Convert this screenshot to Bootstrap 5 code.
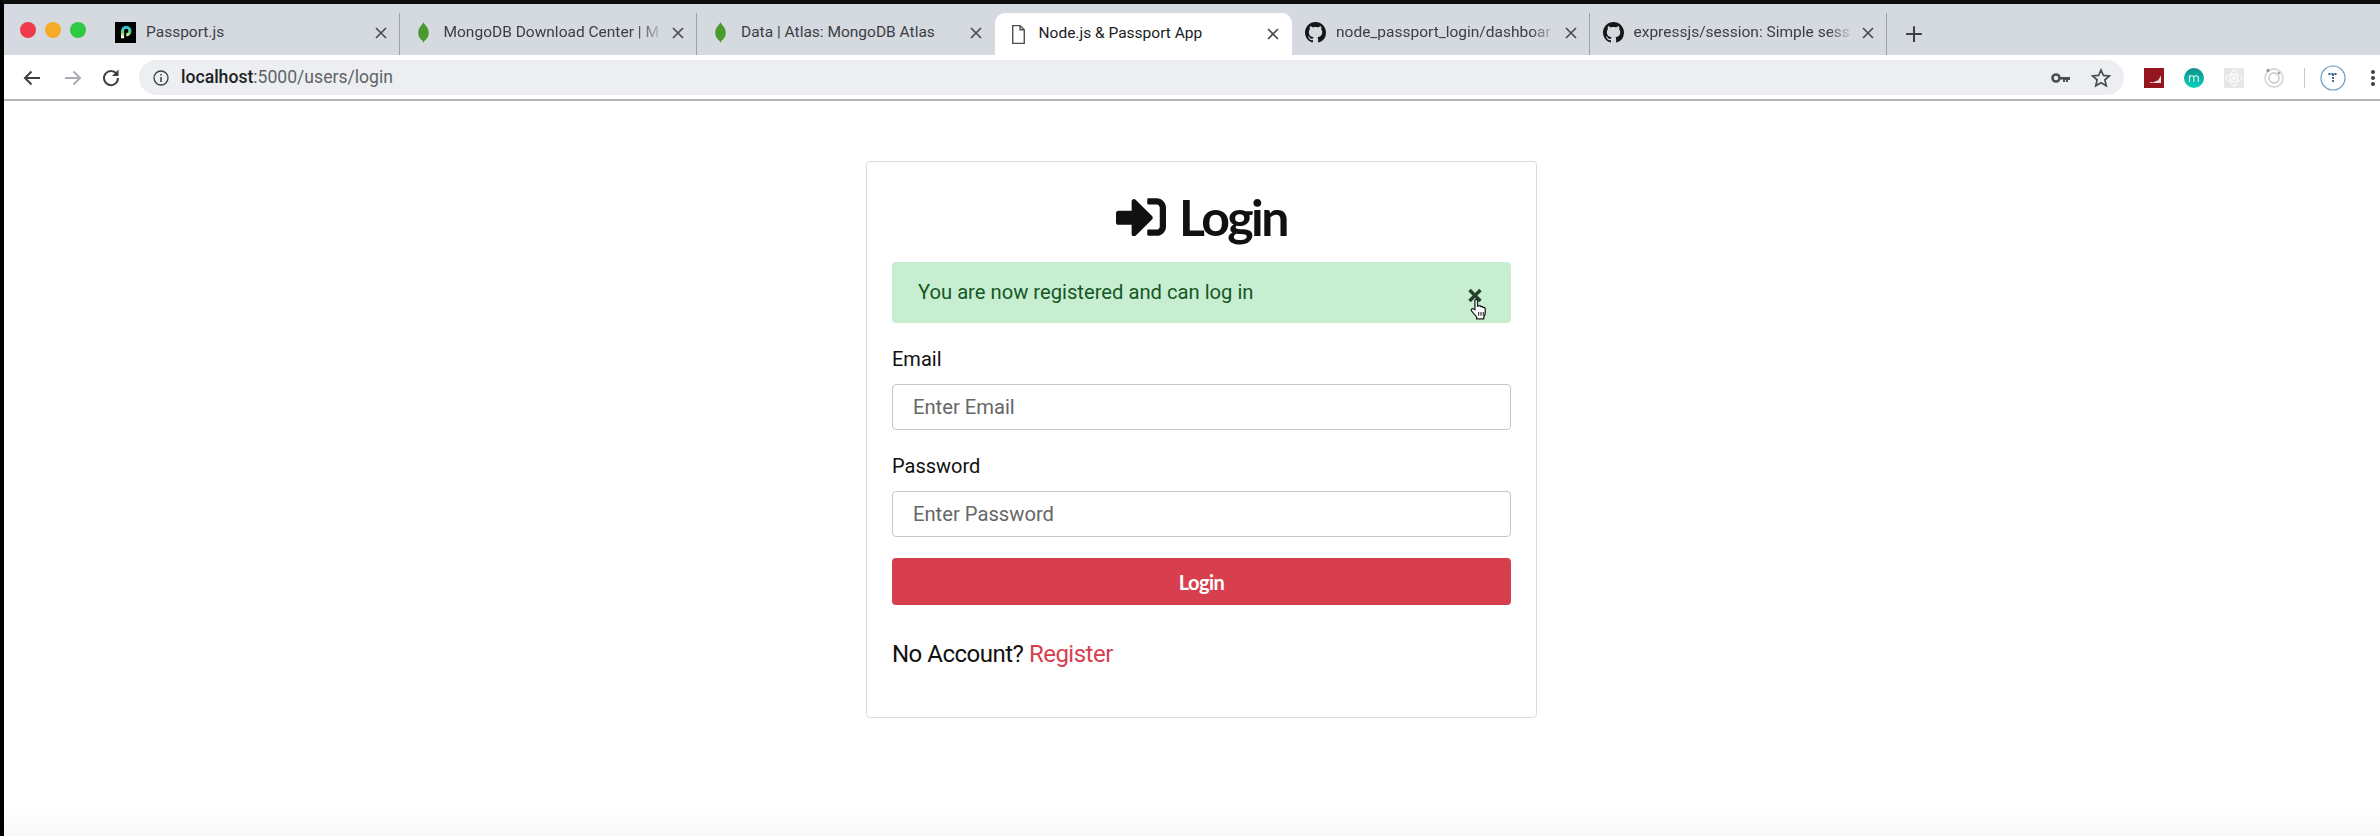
<!DOCTYPE html>
<html lang="en">
<head>
    <meta charset="UTF-8">
    <meta name="viewport" content="width=device-width, initial-scale=1.0">
    <title>Node.js &amp; Passport App</title>
    <link href="https://cdn.jsdelivr.net/npm/bootstrap@5.3.0/dist/css/bootstrap.min.css" rel="stylesheet">
    <script src="https://cdn.jsdelivr.net/npm/bootstrap@5.3.0/dist/js/bootstrap.bundle.min.js"></script>
    <style>
        html, body { height: 100%; }
        body {
            font-family: "Roboto", "Liberation Sans", sans-serif;
            background: #fff;
            overflow: hidden;
        }
        .screen {
            height: 836px;
            border-top: 4px solid #0d0d0d;
            border-left: 4px solid #000;
        }

        /* browser chrome */
        .tab-strip { height: 51px; background: #d5d9e0; padding-left: 98px; }
        .lights { width: 0; }
        .light { width: 16px; height: 16px; border-radius: 50%; flex: none; }
        .light-red { background: #ee3b4c; }
        .light-yellow { background: #f5ab25; }
        .light-green { background: #2ecb42; }
        .lights-box { gap: 9px; margin-left: -82px; margin-top: 1px; padding-top: 17px; }
        .tab-item {
            width: 297.5px;
            height: 42px;
            margin-top: 9px;
            padding: 0 11px 3px 13px;
            font-size: 15.5px;
            color: #3c4043;
            border-right: 1px solid #9da1a8;
        }
        .tab-item.no-line { border-right-color: transparent; }
        .tab-item.tab-active {
            background: #fff;
            color: #202124;
            border-radius: 10px 10px 0 0;
            border-right-color: transparent;
            height: 46px;
            padding-bottom: 4px;
        }
        .tab-icon { width: 21px; height: 21px; flex: none; margin-right: 10px; }
        .tab-title { flex: 1; white-space: nowrap; overflow: hidden; }
        .tab-fade {
            -webkit-mask-image: linear-gradient(to right, #000 88%, transparent 100%);
            mask-image: linear-gradient(to right, #000 88%, transparent 100%);
        }
        .tab-close { width: 12px; height: 12px; flex: none; margin-left: 8px; margin-right: 1px; }
        .plus-btn { width: 18px; height: 18px; margin: 21px 0 0 18px; }

        .tool-bar { height: 46px; background: #fff; border-bottom: 2px solid #b4b4b6; padding-top: 1px; }
        .nav-icon { width: 20px; height: 20px; flex: none; }
        .nav-back { margin-left: 18px; }
        .nav-forward { margin-left: 21px; }
        .nav-reload { margin-left: 18px; }
        .omni {
            width: 1985px;
            height: 35px;
            margin-left: 18px;
            background: #eceef1;
            border-radius: 18px;
            font-size: 17.6px;
            color: #5f6368;
            padding: 0 13px 0 14px;
        }
        .omni b { font-weight: 500; color: #202124; }
        .ext-icon { width: 22px; height: 22px; flex: none; margin-left: 18px; }
        .ext-first { margin-left: 19px; }
        .tool-sep { width: 1px; height: 20px; background: #c8c8c8; margin-left: 19px; }
        .avatar-icon { margin-left: 15px; }
        .menu-dots { margin-left: 24px; }

        /* login page */
        .page {
            height: 735px;
            padding: 60px 0 0 862px;
            background: linear-gradient(to bottom, #fff calc(100% - 30px), #f8f8f8 100%);
        }
        .login-card {
            width: 671px;
            height: 557px;
            border: 1px solid #dcdcdc;
            border-radius: 4px;
            padding: 25px;
        }
        .login-title {
            height: 60px;
            margin: 0 0 15px;
            gap: 13px;
            font-family: "Lato", "Liberation Sans", sans-serif;
            font-weight: 700;
            font-size: 50px;
            letter-spacing: -2.5px;
            color: #111;
        }
        .login-title svg { width: 50px; height: 38px; }
        .msg-box {
            height: 61px;
            margin-bottom: 24px;
            padding: 0 29px 0 26px;
            background: #c8eed2;
            border: 0;
            border-radius: 4px;
            color: #155724;
            font-size: 20.2px;
        }
        .msg-close { position: relative; width: 14px; height: 15px; padding: 0; margin-top: 5px; border: 0; background: none; }
        .msg-close svg { display: block; }
        .msg-close .hand-cursor { position: absolute; left: 0; top: 9px; width: 23px; height: 23px; }
        .field-label { display: block; height: 24px; line-height: 24px; margin-bottom: 13px; font-size: 20px; color: #111; }
        .field-input {
            height: 46px;
            padding: 0 20px;
            margin-bottom: 24px;
            font-size: 20.2px;
            border: 1px solid #c4c7ca;
            border-radius: 4px;
        }
        .field-input::placeholder { color: #666; opacity: 1; }
        .field-input.last-input { margin-bottom: 21px; }
        .login-btn {
            height: 47px;
            background: #d83f4e;
            border: 0;
            border-radius: 4px;
            font-family: "Lato", "Liberation Sans", sans-serif;
            font-weight: 700;
            font-size: 20px;
            color: #fff;
            letter-spacing: -.5px;
        }
        .sign-up { margin: 31px 0 0; line-height: 36px; font-size: 24px; color: #111; letter-spacing: -.5px; }
        .sign-up a { color: #d83f4e; text-decoration: none; }
    </style>
</head>
<body>
<div class="screen">

    <!-- tabs -->
    <div class="tab-strip d-flex align-items-start">
        <div class="lights">
            <div class="lights-box d-flex">
                <div class="light light-red"></div>
                <div class="light light-yellow"></div>
                <div class="light light-green"></div>
            </div>
        </div>
        <div class="tab-item d-flex align-items-center">
            <svg class="tab-icon" viewBox="0 0 20 20"><defs><linearGradient id="ppt" x1="0" y1="0" x2="0" y2="1"><stop offset="0" stop-color="#2ec4e0"/><stop offset=".5" stop-color="#6ad66a"/><stop offset=".8" stop-color="#f6f3c0"/><stop offset="1" stop-color="#fff"/></linearGradient></defs><rect width="20" height="20" fill="#000"/><path d="M7.200 15.500V8.500a3.500 3.500 0 1 1 3.500 3.500" fill="none" stroke="url(#ppt)" stroke-width="3"/></svg>
            <div class="tab-title">Passport.js</div>
            <svg class="tab-close" viewBox="0 0 12 12"><path d="M1 1l10 10M11 1L1 11" stroke="#4a4d52" stroke-width="1.7"/></svg>
        </div>
        <div class="tab-item d-flex align-items-center">
            <svg class="tab-icon" viewBox="0 0 20 20"><path d="M10 0c1 3 5 5 5 10s-3 7-4.300 8L10 20l-.7-2C8 17 5 15 5 10s4-7 5-10z" fill="#4a9a2e"/></svg>
            <div class="tab-title tab-fade">MongoDB Download Center | M</div>
            <svg class="tab-close" viewBox="0 0 12 12"><path d="M1 1l10 10M11 1L1 11" stroke="#4a4d52" stroke-width="1.7"/></svg>
        </div>
        <div class="tab-item no-line d-flex align-items-center">
            <svg class="tab-icon" viewBox="0 0 20 20"><path d="M10 0c1 3 5 5 5 10s-3 7-4.300 8L10 20l-.7-2C8 17 5 15 5 10s4-7 5-10z" fill="#4a9a2e"/></svg>
            <div class="tab-title">Data | Atlas: MongoDB Atlas</div>
            <svg class="tab-close" viewBox="0 0 12 12"><path d="M1 1l10 10M11 1L1 11" stroke="#4a4d52" stroke-width="1.7"/></svg>
        </div>
        <div class="tab-item tab-active d-flex align-items-center">
            <svg class="tab-icon" viewBox="0 0 20 20"><path d="M4.500 1.500h7l4 4v13h-11zM11.500 1.500v4h4" fill="#fff" stroke="#4a4d52" stroke-width="1.300"/></svg>
            <div class="tab-title">Node.js &amp; Passport App</div>
            <svg class="tab-close" viewBox="0 0 12 12"><path d="M1 1l10 10M11 1L1 11" stroke="#4a4d52" stroke-width="1.7"/></svg>
        </div>
        <div class="tab-item d-flex align-items-center">
            <svg class="tab-icon" viewBox="0 0 16 16"><path fill="#161616" d="M8 0C3.580 0 0 3.580 0 8c0 3.540 2.290 6.530 5.470 7.590.4.070.55-.17.55-.38 0-.19-.01-.82-.01-1.490-2.010.37-2.530-.49-2.690-.94-.09-.23-.48-.94-.82-1.130-.28-.15-.68-.52-.01-.53.63-.01 1.080.58 1.230.82.72 1.210 1.870.87 2.330.66.070-.52.28-.87.51-1.070-1.780-.2-3.640-.89-3.640-3.950 0-.87.31-1.590.82-2.150-.08-.2-.36-1.020.08-2.120 0 0 .67-.21 2.200.82.64-.18 1.320-.27 2-.27.68 0 1.360.09 2 .27 1.530-1.040 2.200-.82 2.200-.82.44 1.100.16 1.920.08 2.120.51.56.82 1.270.82 2.150 0 3.070-1.870 3.750-3.650 3.950.29.25.54.73.54 1.480 0 1.070-.01 1.930-.01 2.200 0 .21.15.46.55.38A8.013 8.013 0 0 0 16 8c0-4.420-3.580-8-8-8z"/></svg>
            <div class="tab-title tab-fade">node_passport_login/dashboar</div>
            <svg class="tab-close" viewBox="0 0 12 12"><path d="M1 1l10 10M11 1L1 11" stroke="#4a4d52" stroke-width="1.7"/></svg>
        </div>
        <div class="tab-item d-flex align-items-center">
            <svg class="tab-icon" viewBox="0 0 16 16"><path fill="#161616" d="M8 0C3.580 0 0 3.580 0 8c0 3.540 2.290 6.530 5.470 7.590.4.070.55-.17.55-.38 0-.19-.01-.82-.01-1.490-2.010.37-2.530-.49-2.690-.94-.09-.23-.48-.94-.82-1.130-.28-.15-.68-.52-.01-.53.63-.01 1.080.58 1.230.82.72 1.210 1.870.87 2.330.66.070-.52.28-.87.51-1.070-1.780-.2-3.640-.89-3.640-3.950 0-.87.31-1.590.82-2.150-.08-.2-.36-1.020.08-2.120 0 0 .67-.21 2.200.82.64-.18 1.320-.27 2-.27.68 0 1.360.09 2 .27 1.530-1.040 2.200-.82 2.200-.82.44 1.100.16 1.920.08 2.120.51.56.82 1.270.82 2.150 0 3.070-1.870 3.750-3.650 3.950.29.25.54.73.54 1.480 0 1.070-.01 1.930-.01 2.200 0 .21.15.46.55.38A8.013 8.013 0 0 0 16 8c0-4.420-3.580-8-8-8z"/></svg>
            <div class="tab-title tab-fade">expressjs/session: Simple sess</div>
            <svg class="tab-close" viewBox="0 0 12 12"><path d="M1 1l10 10M11 1L1 11" stroke="#4a4d52" stroke-width="1.7"/></svg>
        </div>
        <svg class="plus-btn" viewBox="0 0 16 16"><path d="M8 1v14M1 8h14" stroke="#3c4043" stroke-width="1.800"/></svg>
    </div>

    <!-- address bar -->
    <div class="tool-bar d-flex align-items-center">
        <svg class="nav-icon nav-back" viewBox="0 0 20 20"><path d="M18 10H3M9.500 3.500L3 10l6.500 6.500" fill="none" stroke="#3c4043" stroke-width="2"/></svg>
        <svg class="nav-icon nav-forward" viewBox="0 0 20 20"><path d="M2 10h15M10.500 3.500L17 10l-6.500 6.500" fill="none" stroke="#a9acb0" stroke-width="2"/></svg>
        <svg class="nav-icon nav-reload" viewBox="0 0 20 20"><path d="M16 6.500A7 7 0 1 0 17 10" fill="none" stroke="#3c4043" stroke-width="2"/><path d="M17.500 1.500v6.500h-6.500z" fill="#3c4043"/></svg>
        <div class="omni d-flex align-items-center">
            <svg class="me-2" width="16" height="16" viewBox="0 0 16 16"><circle cx="8" cy="8" r="7" fill="none" stroke="#3c4043" stroke-width="1.300"/><path d="M8 7v5M8 4v1.600" stroke="#3c4043" stroke-width="1.500"/></svg>
            <div class="flex-grow-1 ms-1"><b>localhost</b>:5000/users/login</div>
            <svg class="me-3" width="20" height="14" viewBox="0 0 20 14"><circle cx="5" cy="7" r="3.500" fill="none" stroke="#4a4d52" stroke-width="2.600"/><path d="M9 6h10v3h-2v2h-2V9h-1v2h-2V8.500H9z" fill="#4a4d52"/></svg>
            <svg class="ms-1" width="20" height="20" viewBox="0 0 20 20"><path d="M10 2l2.400 5.400 5.900.6-4.400 3.900 1.300 5.800L10 14.700l-5.200 3 1.300-5.800L1.700 8l5.900-.6z" fill="none" stroke="#4a4d52" stroke-width="1.700"/></svg>
        </div>
        <svg class="ext-icon ext-first" viewBox="0 0 22 22"><rect x="1" y="1" width="20" height="20" fill="#95151f"/><path d="M4 16h2l2-1 2 .5 3-1.500 2-.5 3-5v7.500z" fill="#fff" opacity=".85"/></svg>
        <svg class="ext-icon" viewBox="0 0 22 22"><defs><linearGradient id="mint" x1="0" y1="0" x2="0" y2="1"><stop offset="0" stop-color="#0e8f8a"/><stop offset="1" stop-color="#08d3bd"/></linearGradient></defs><circle cx="11" cy="11" r="10" fill="url(#mint)"/><path d="M6.500 15V8.500M6.500 10q2.200-2.500 4.400 0V15M10.900 10q2.200-2.500 4.400 0V15" fill="none" stroke="#d7f5ee" stroke-width="1.200"/></svg>
        <svg class="ext-icon" viewBox="0 0 22 22"><rect x="1" y="1" width="20" height="20" fill="#e7e7e7"/><ellipse cx="11" cy="11" rx="8" ry="3.500" fill="none" stroke="#fafafa" stroke-width="1.300"/><ellipse cx="11" cy="11" rx="3.500" ry="8" fill="none" stroke="#fafafa" stroke-width="1.300"/><circle cx="11" cy="11" r="2" fill="#fafafa"/></svg>
        <svg class="ext-icon" viewBox="0 0 22 22"><circle cx="11" cy="11" r="9" fill="none" stroke="#d9d9d9" stroke-width="1.800"/><circle cx="11" cy="11" r="5" fill="none" stroke="#d0d0d0" stroke-width="1.800"/><circle cx="5" cy="3.500" r="1.700" fill="#999"/><circle cx="16" cy="6" r="1.300" fill="#aaa"/></svg>
        <div class="tool-sep"></div>
        <svg class="avatar-icon" width="26" height="26" viewBox="0 0 26 26"><circle cx="13" cy="13" r="12" fill="#fff" stroke="#6d9cc0" stroke-width="1.200"/><path d="M8.500 9h9M13 9v9" stroke="#2c5f8a" stroke-width="1.800" stroke-dasharray="2 1"/></svg>
        <svg class="menu-dots" width="6" height="20" viewBox="0 0 6 20"><circle cx="3" cy="4" r="2" fill="#3c4043"/><circle cx="3" cy="10" r="2" fill="#3c4043"/><circle cx="3" cy="16" r="2" fill="#3c4043"/></svg>
    </div>

    <!-- page -->
    <div class="page">
        <div class="card login-card">
            <h1 class="login-title d-flex justify-content-center align-items-center">
                <svg viewBox="0 64 512 384"><path fill="#111" d="M416 448h-84c-6.600 0-12-5.400-12-12v-40c0-6.600 5.400-12 12-12h84c17.700 0 32-14.300 32-32V160c0-17.700-14.300-32-32-32h-84c-6.600 0-12-5.400-12-12V76c0-6.600 5.400-12 12-12h84c53 0 96 43 96 96v192c0 53-43 96-96 96zm-47-201L201 79c-15-15-41-4.500-41 17v96H24c-13.300 0-24 10.700-24 24v96c0 13.300 10.700 24 24 24h136v96c0 21.500 26 32 41 17l168-168c9.300-9.400 9.300-24.600 0-34z"/></svg>
                <span>Login</span>
            </h1>
            <div class="alert msg-box d-flex justify-content-between align-items-center" role="alert">
                <span>You are now registered and can log in</span>
                <button type="button" class="msg-close" aria-label="Close">
                    <svg width="14" height="15" viewBox="0 0 14 15"><path d="M1.500 2l11 11M12.500 2l-11 11" stroke="#26402d" stroke-width="3.400"/></svg>
                    <svg class="hand-cursor" viewBox="0 0 20 20"><path d="M6 11V3.200c0-1.600 2.300-1.600 2.300 0V8l1-.3c1-.3 1.600.1 1.800.7 1-.4 1.700 0 1.900.7 1.100-.3 2 .2 2 1.300v3.500c0 1.500-.6 2.500-1.300 3.600v1.500H7.500v-1.700L3.200 12.300c-1.100-1.300.4-2.800 1.700-1.800z" fill="#fff" stroke="#1a1a1a" stroke-width="1.100"/><path d="M9.300 13v3.300M11.300 13v3.300M13.300 13v3.300" stroke="#1a1a1a" stroke-width=".9"/></svg>
                </button>
            </div>
            <form>
                <label class="field-label" for="email">Email</label>
                <input type="email" id="email" class="form-control field-input" placeholder="Enter Email">
                <label class="field-label" for="password">Password</label>
                <input type="password" id="password" class="form-control field-input last-input" placeholder="Enter Password">
                <div class="d-grid">
                    <button type="button" class="btn login-btn">Login</button>
                </div>
            </form>
            <p class="sign-up">No Account? <a href="#">Register</a></p>
        </div>
    </div>
</div>
</body>
</html>
